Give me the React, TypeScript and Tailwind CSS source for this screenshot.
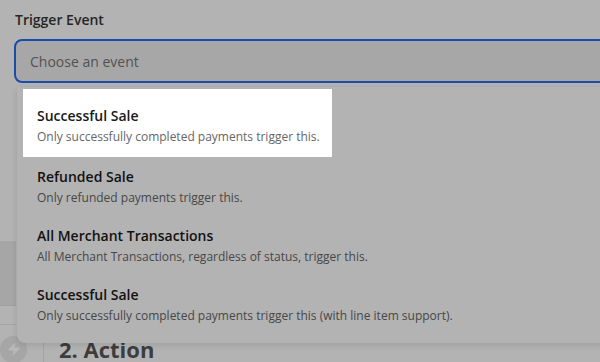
import React from 'react';
import { Zap } from 'lucide-react';

interface TriggerOption {
  id: string;
  title: string;
  description: string;
}

const options: TriggerOption[] = [
  { id: 'sale', title: 'Successful Sale', description: 'Only successfully completed payments trigger this.' },
  { id: 'refund', title: 'Refunded Sale', description: 'Only refunded payments trigger this.' },
  { id: 'all', title: 'All Merchant Transactions', description: 'All Merchant Transactions, regardless of status, trigger this.' },
  { id: 'sale-lines', title: 'Successful Sale', description: 'Only successfully completed payments trigger this (with line item support).' },
];

const OptionRow: React.FC<{ option: TriggerOption; highlighted?: boolean }> = ({ option, highlighted }) => {
  if (highlighted) {
    return (
      <div className="w-[309px] ml-[6px] bg-white pl-[14px] pt-[17px] pb-[11px]">
        <p className="text-[14px] leading-5 font-semibold text-[#1a1a1a]">{option.title}</p>
        <p className="mt-[2px] text-[12px] leading-[18px] text-[#666666]">{option.description}</p>
      </div>
    );
  }
  return (
    <div className="pl-[20px] pt-[10px] pb-[9px]">
      <p className="text-[14px] leading-5 font-semibold text-[#121212]">{option.title}</p>
      <p className="mt-[2px] text-[12px] leading-[18px] text-[#474747]">{option.description}</p>
    </div>
  );
};

export default function App() {
  return (
    <div
      className="relative w-[600px] h-[362px] overflow-hidden bg-[#b3b3b3]"
      style={{ fontFamily: '"Open Sans", "Noto Sans", sans-serif' }}
    >
      <div className="pl-[14px] pt-[10px]">
        <label className="block pl-[1px] text-[14px] leading-5 font-semibold text-[#262626]">Trigger Event</label>
        <div className="mt-[9px] w-[640px] h-[44px] rounded-[8px] border-2 border-[#1a4caa] bg-[#a7a7a7] flex items-center pl-[14px]">
          <span className="text-[14px] text-[#525252]">Choose an event</span>
        </div>
      </div>

      {/* page content behind the menu */}
      <div className="mt-[158px] w-[16px] h-[65px] bg-[#a6a6a6] border-b border-[#9f9f9f]" />
      <div className="w-[16px] h-[19px] border-b border-[#a5a5a5]" />
      <div className="mt-[9px] flex items-center h-[30px]">
        <div className="w-[27px] h-[27px] rounded-full bg-[#a6a6a6] flex items-center justify-center">
          <Zap className="w-[14px] h-[14px] text-[#b9b9b9] fill-[#b9b9b9]" strokeWidth={1} />
        </div>
        <div className="ml-[16px] w-px h-[30px] bg-[#a3a3a3]" />
        <h2 className="ml-[15px] text-[22px] leading-[30px] font-bold text-[#3d3d3d]">2. Action</h2>
      </div>

      {/* dropdown menu */}
      <div className="absolute left-[17px] top-[87px] w-[620px] h-[256px] bg-[#b3b3b3] rounded-bl-[8px] shadow-[0_2px_6px_rgba(0,0,0,0.12)] pt-[2px]">
        {options.map((o, i) => (
          <OptionRow key={o.id} option={o} highlighted={i === 0} />
        ))}
      </div>
    </div>
  );
}
